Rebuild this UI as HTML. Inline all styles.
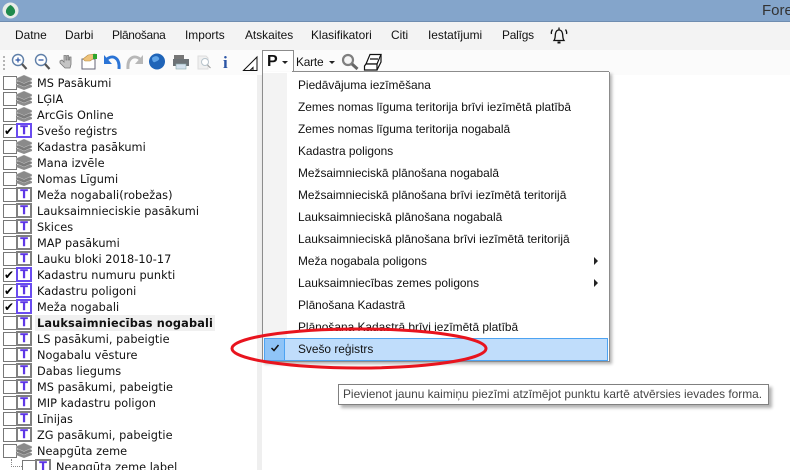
<!DOCTYPE html>
<html><head><meta charset="utf-8">
<style>
html,body{margin:0;padding:0;width:790px;height:470px;overflow:hidden;background:#fff}
#r{position:relative;width:790px;height:470px;overflow:hidden;font-family:"Liberation Sans",sans-serif}
#r div,#r span.a{position:absolute;white-space:nowrap}
.m{top:27px;font-size:11.9px;line-height:16px;color:#111}
.t{left:37px;margin-top:1px;font:11.3px/16px "DejaVu Sans",sans-serif;color:#111;letter-spacing:.04px}
.c{left:3px;width:12px;height:12px;border:1px solid #777;background:#fff}
.i{left:16px;margin-top:-1px;width:12px;height:11px;border:2px solid #808080;background:#fff;color:#5a32e6;font:bold 12px/11px "Liberation Sans",sans-serif;text-align:center;-webkit-text-stroke:.5px #5a32e6}
.i.on{border-color:#6a4cf0}
.d{left:298px;font-size:11.9px;line-height:16px;color:#111}
</style></head><body><div id="r">
<div style="left:0;top:0;width:790px;height:21px;background:#84a5cb;border-bottom:1px solid #6f8db0"></div>
<svg style="position:absolute;left:2px;top:2px" width="17" height="17" viewBox="0 0 17 17"><circle cx="8.5" cy="8.5" r="8" fill="#e8ece8"/><path d="M8.5 3C5 5 3.5 8 4 10.5 5 13 7 14 8.5 14 10 14 12 13 13 10.5 13.500 8 12 5 8.500 3Z" fill="#1f8a4c"/></svg>
<div style="left:762px;top:2px;font-size:15px;line-height:18px;color:#333">Fore</div>
<div style="left:0;top:22px;width:790px;height:28px;background:#f3f3f3"></div>
<div class="m" style="left:15px">Datne</div>
<div class="m" style="left:65px">Darbi</div>
<div class="m" style="left:112px;letter-spacing:-.3px">Plānošana</div>
<div class="m" style="left:185px">Imports</div>
<div class="m" style="left:245px">Atskaites</div>
<div class="m" style="left:311px">Klasifikatori</div>
<div class="m" style="left:391px">Citi</div>
<div class="m" style="left:428px">Iestatījumi</div>
<div class="m" style="left:502px;letter-spacing:-.2px">Palīgs</div>
<svg style="position:absolute;left:549px;top:26px" width="20" height="20" viewBox="0 0 20 20" fill="none" stroke="#111" stroke-width="1.3"><path d="M5 14.500C6.500 12.500 6 10 6.500 7.500 7 5 8.500 4 10 4S13 5 13.500 7.500C14 10 13.500 12.500 15 14.500Z"/><path d="M8.500 16.500h3" stroke-width="2"/><path d="M10 1.500v2M3.500 3.500C2.500 5 2 6.500 2.500 8M16.500 3.500C17.500 5 18 6.500 17.500 8"/></svg>
<div style="left:0;top:50px;width:790px;height:25px;background:#fbfbfb"></div>
<div style="left:3px;top:56px;width:2px;height:14px;border-left:2px dotted #b5b5b5"></div>

<svg style="position:absolute;left:0;top:50px" width="262" height="25" viewBox="0 0 262 25">
<g fill="#fff" stroke="#5f7fa8" stroke-width="1.400"><circle cx="18" cy="10" r="5.500"/><circle cx="41" cy="10" r="5.500"/></g>
<path d="M22 14l4.500 5M45 14l4.500 5" stroke="#555" stroke-width="2.200"/>
<path d="M15.500 10h5M18 7.500v5M38.500 10h5" stroke="#2b55a5" stroke-width="1.200"/>
<path d="M60 11l2-1 2 2V5.500h2V10h1V5.500h1.500V10h1V7h1.500v7.500L70 18h-5l-5-5Z" fill="#c4c4c4" stroke="#777" stroke-width=".8"/>
<rect x="82" y="9" width="13" height="10" fill="#fff" stroke="#667"/>
<path d="M83 9l5-4 7-1 1 3-6 4-5 0Z" fill="#eec27a" stroke="#b58a40" stroke-width=".6"/><rect x="93" y="4" width="4" height="5" fill="#2da52d"/>
<path d="M106 10c6-6 14-3 13 9" fill="none" stroke="#2b74d6" stroke-width="3"/><path d="M104 5v9h8Z" fill="#2b74d6"/>
<path d="M141 10c-6-6-14-3-13 9" fill="none" stroke="#b8b8b8" stroke-width="3"/><path d="M143 5v9h-8Z" fill="#b8b8b8"/>
<circle cx="157" cy="11.500" r="8" fill="#1f64b8"/><path d="M152 8c3-3 6-2 7 0s-2 3-4 4-3-2-3-4Z" fill="#5fa4e8"/>
<rect x="174" y="5" width="10" height="4" fill="#777"/><rect x="173" y="9" width="16" height="7" fill="#6c7276"/><rect x="176" y="14" width="10" height="5" fill="#d5e2ee" stroke="#8aa" stroke-width=".6"/>
<path d="M198 6h8l2 2v11h-10Z" fill="#f0f0f0" stroke="#ddd"/><circle cx="205" cy="12" r="3.500" fill="#fff" stroke="#b8c4cc"/><path d="M207.500 15l3 3" stroke="#999"/>
<text x="223" y="18" font-family="Liberation Serif" font-weight="bold" font-size="17" fill="#2b55a5">i</text>
<path d="M243.500 20.500L257 7v13.500Z M250 20.500l3-3v3" fill="#fff" stroke="#111"/>
</svg>

<div style="left:262px;top:50px;width:30px;height:22px;background:#fff;border:1px solid #8c8c8c;border-bottom:0;border-right:1px solid #8c8c8c"></div>
<div style="left:267px;top:53px;font-size:16px;font-weight:bold;line-height:18px;color:#111">P</div>
<div style="left:282px;top:61px;border:3px solid transparent;border-top-color:#222;border-bottom:0"></div>
<div style="left:296px;top:54px;font-size:11.900px;letter-spacing:-.2px;line-height:16px;color:#111">Karte</div>
<div style="left:329px;top:61px;border:3px solid transparent;border-top-color:#222;border-bottom:0"></div>
<svg style="position:absolute;left:340px;top:52px" width="20" height="20" viewBox="0 0 20 20"><circle cx="8" cy="8" r="5" fill="#f6f6f6" stroke="#7f7f7f" stroke-width="2.200"/><path d="M12 12l5.500 5" stroke="#666" stroke-width="3"/></svg>
<svg style="position:absolute;left:363px;top:52px" width="20" height="20" viewBox="0 0 20 20" fill="#fff" stroke="#111" stroke-width="1.200"><path d="M7 2.500h11L14 12H3Z"/><path d="M3 12h11v6H1.500V14Z"/><path d="M14 18l4-8V2.500M7 7h8"/></svg>

<div style="left:3px;top:75px;width:254px;height:395px;background:#fff"></div>
<div style="left:257px;top:75px;width:5px;height:395px;background:#efefef"></div>

<svg width="0" height="0" style="position:absolute"><defs><g id="lay"><path d="M8 7L16 10.500V12L8 15 0 12V10.500Z" fill="#8c8c8c"/><path d="M8 3.500L16 7V8.500L8 12 0 8.500V7Z" fill="#7c7c7c" stroke="#c8c8c8" stroke-width=".5"/><path d="M8 0L16 3.500V5L8 8.500 0 5V3.500Z" fill="#8a8a8a" stroke="#c8c8c8" stroke-width=".5"/></g></defs></svg>

<div class="c" style="top:76px"></div><svg style="position:absolute;left:16px;top:75px" width="16" height="15"><use href="#lay"/></svg><div class="t" style="top:75px">MS Pasākumi</div>
<div class="c" style="top:92px"></div><svg style="position:absolute;left:16px;top:91px" width="16" height="15"><use href="#lay"/></svg><div class="t" style="top:91px">LĢIA</div>
<div class="c" style="top:108px"></div><svg style="position:absolute;left:16px;top:107px" width="16" height="15"><use href="#lay"/></svg><div class="t" style="top:107px">ArcGis Online</div>
<div class="c" style="top:124px;font:bold 12px/12px 'DejaVu Sans'">✔</div><div class="i on" style="top:124px">T</div><div class="t" style="top:123px">Svešo reģistrs</div>
<div class="c" style="top:140px"></div><svg style="position:absolute;left:16px;top:139px" width="16" height="15"><use href="#lay"/></svg><div class="t" style="top:139px">Kadastra pasākumi</div>
<div class="c" style="top:156px"></div><svg style="position:absolute;left:16px;top:155px" width="16" height="15"><use href="#lay"/></svg><div class="t" style="top:155px">Mana izvēle</div>
<div class="c" style="top:172px"></div><svg style="position:absolute;left:16px;top:171px" width="16" height="15"><use href="#lay"/></svg><div class="t" style="top:171px">Nomas Līgumi</div>
<div class="c" style="top:188px"></div><div class="i" style="top:188px">T</div><div class="t" style="top:187px">Meža nogabali(robežas)</div>
<div class="c" style="top:204px"></div><div class="i" style="top:204px">T</div><div class="t" style="top:203px">Lauksaimnieciskie pasākumi</div>
<div class="c" style="top:220px"></div><div class="i" style="top:220px">T</div><div class="t" style="top:219px">Skices</div>
<div class="c" style="top:236px"></div><div class="i" style="top:236px">T</div><div class="t" style="top:235px">MAP pasākumi</div>
<div class="c" style="top:252px"></div><div class="i" style="top:252px">T</div><div class="t" style="top:251px">Lauku bloki 2018-10-17</div>
<div class="c" style="top:268px;font:bold 12px/12px 'DejaVu Sans'">✔</div><div class="i on" style="top:268px">T</div><div class="t" style="top:267px">Kadastru numuru punkti</div>
<div class="c" style="top:284px;font:bold 12px/12px 'DejaVu Sans'">✔</div><div class="i on" style="top:284px">T</div><div class="t" style="top:283px">Kadastru poligoni</div>
<div class="c" style="top:300px;font:bold 12px/12px 'DejaVu Sans'">✔</div><div class="i on" style="top:300px">T</div><div class="t" style="top:299px">Meža nogabali</div>
<div style="left:35px;top:315px;width:180px;height:16px;background:#f0f0f0"></div>
<div class="c" style="top:316px"></div><div class="i" style="top:316px">T</div><div class="t" style="top:315px;font-weight:bold;letter-spacing:.17px">Lauksaimniecības nogabali</div>
<div class="c" style="top:332px"></div><div class="i" style="top:332px">T</div><div class="t" style="top:331px">LS pasākumi, pabeigtie</div>
<div class="c" style="top:348px"></div><div class="i" style="top:348px">T</div><div class="t" style="top:347px">Nogabalu vēsture</div>
<div class="c" style="top:364px"></div><div class="i" style="top:364px">T</div><div class="t" style="top:363px">Dabas liegums</div>
<div class="c" style="top:380px"></div><div class="i" style="top:380px">T</div><div class="t" style="top:379px">MS pasākumi, pabeigtie</div>
<div class="c" style="top:396px"></div><div class="i" style="top:396px">T</div><div class="t" style="top:395px">MIP kadastru poligon</div>
<div class="c" style="top:412px"></div><div class="i" style="top:412px">T</div><div class="t" style="top:411px">Līnijas</div>
<div class="c" style="top:428px"></div><div class="i" style="top:428px">T</div><div class="t" style="top:427px">ZG pasākumi, pabeigtie</div>
<div class="c" style="top:444px"></div><svg style="position:absolute;left:16px;top:443px" width="16" height="15"><use href="#lay"/></svg><div class="t" style="top:443px">Neapgūta zeme</div>
<div style="left:11px;top:459px;width:10px;height:7px;border-left:1px dotted #888;border-bottom:1px dotted #888"></div>
<div class="c" style="left:22px;top:460px"></div><div class="i" style="left:35px;top:460px">T</div><div class="t" style="left:56px;top:459px">Neapgūta zeme label</div>

<div style="left:262px;top:72px;width:346px;height:289px;background:#fff;border:1px solid #8c8c8c;border-top:0;box-shadow:2px 2px 3px rgba(0,0,0,.3)"></div>
<div style="left:292px;top:71px;width:317px;height:1px;background:#8c8c8c"></div>
<div style="left:263px;top:73px;width:24px;height:288px;background:#f3f3f3"></div>
<div class="d" style="top:77px">Piedāvājuma iezīmēšana</div>
<div class="d" style="top:99px">Zemes nomas līguma teritorija brīvi iezīmētā platībā</div>
<div class="d" style="top:121px">Zemes nomas līguma teritorija nogabalā</div>
<div class="d" style="top:143px">Kadastra poligons</div>
<div class="d" style="top:165px">Mežsaimnieciskā plānošana nogabalā</div>
<div class="d" style="top:187px">Mežsaimnieciskā plānošana brīvi iezīmētā teritorijā</div>
<div class="d" style="top:209px">Lauksaimnieciskā plānošana nogabalā</div>
<div class="d" style="top:231px">Lauksaimnieciskā plānošana brīvi iezīmētā teritorijā</div>
<div class="d" style="top:253px">Meža nogabala poligons</div>
<div class="d" style="top:275px">Lauksaimniecības zemes poligons</div>
<div class="d" style="top:297px">Plānošana Kadastrā</div>
<div class="d" style="top:319px">Plānošana Kadastrā brīvi iezīmētā platībā</div>
<div style="left:594px;top:257px;border:4px solid transparent;border-left-color:#222;border-right:0"></div>
<div style="left:594px;top:279px;border:4px solid transparent;border-left-color:#222;border-right:0"></div>
<div style="left:264px;top:338px;width:342px;height:21px;background:#c0ddfb;border:1px solid #4da3f2"></div>
<div style="left:265px;top:339px;width:19px;height:21px;background:#8fc4f7;border:1px solid #4da3f2;border-width:0 1px 0 0"></div>
<svg style="position:absolute;left:270px;top:343px" width="10" height="10"><path d="M1.500 5l2.500 2.500L8.500 2" fill="none" stroke="#111" stroke-width="1.500"/></svg>
<div class="d" style="top:341px">Svešo reģistrs</div>

<svg style="position:absolute;left:0;top:0" width="790" height="470"><ellipse cx="359" cy="348.500" rx="127" ry="19.500" fill="none" stroke="#e8141e" stroke-width="3"/></svg>

<div style="left:338px;top:384px;width:429px;height:19px;background:#fff;border:1px solid #808080;box-shadow:3px 3px 3px rgba(0,0,0,.3)"></div>
<div style="left:343px;top:386px;font-size:11.900px;line-height:16px;color:#444">Pievienot jaunu kaimiņu piezīmi atzīmējot punktu kartē atvērsies ievades forma.</div>
</div></body></html>
